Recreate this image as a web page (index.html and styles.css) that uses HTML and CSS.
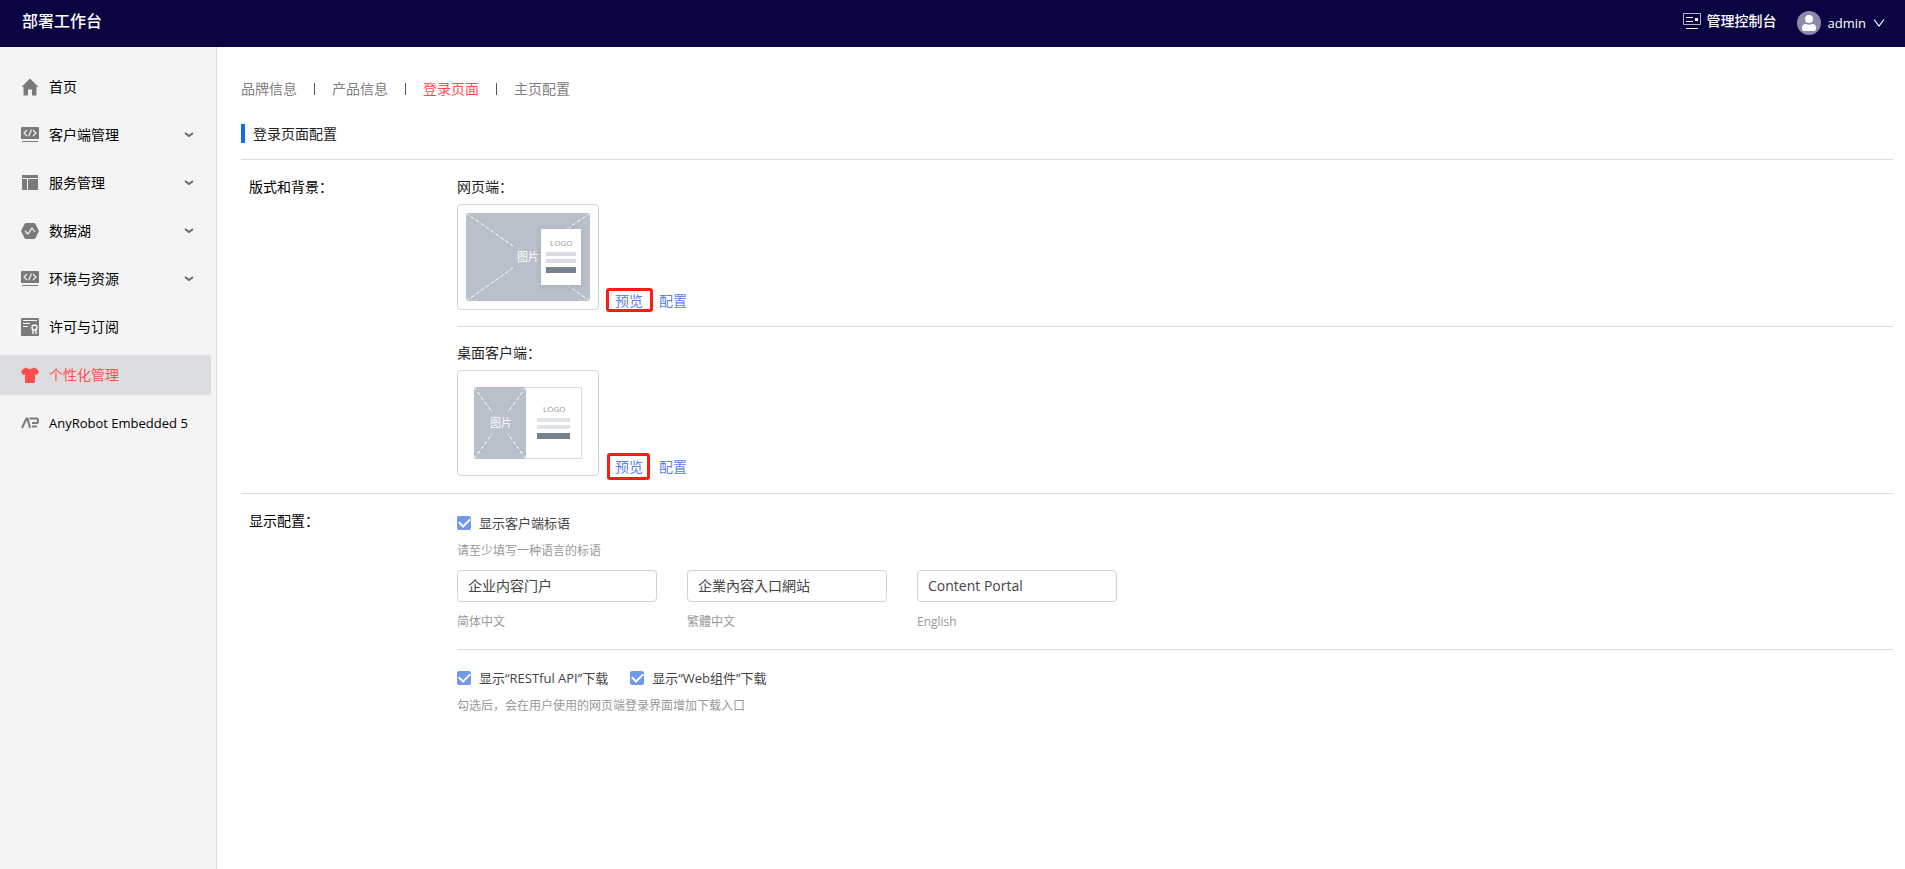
FILE: index.html
```html
<!DOCTYPE html>
<html lang="zh-CN">
<head>
<meta charset="utf-8">
<title>部署工作台</title>
<link rel="stylesheet" href="styles.css">
</head>
<body>
<svg class="defs" aria-hidden="true">
  <symbol id="i-code" viewBox="0 0 18 16">
    <path fill="#7a7a7a" d="M1 0h16q1 0 1 1v11H0V1q0-1 1-1zM1 14h16v1H1z"/>
    <path fill="none" stroke="#f4f4f4" stroke-width="1.200" d="M6 3L3 6 6 9M12 3L15 6 12 9M10.500 2.500L7.500 9.500"/>
  </symbol>
  <symbol id="i-down" viewBox="0 0 10 6">
    <path fill="none" stroke="#6b6b6b" stroke-width="2" d="M1 1l4 3 4-3"/>
  </symbol>
</svg>
<header class="topbar">
  <h1 class="brand">部署工作台</h1>
  <div class="tools">
    <button class="tool" type="button">
      <svg class="i-console" viewBox="0 0 18 16" width="18" height="16"><g fill="none" stroke="#fff"><path stroke="#b5b4cc" d="M.5.500h17v11H.5z"/><path d="M3 4.500h7M3 8.500h7M3 15.500h12"/></g><path fill="#fff" d="M12 5h3v3h-3z"/></svg>
      <span>管理控制台</span>
    </button>
    <button class="tool user" type="button">
      <svg viewBox="0 0 24 24" width="24" height="24"><circle cx="12" cy="12" r="12" fill="#8c8aab"/><circle cx="12" cy="8" r="4" fill="#fff"/><path fill="#fff" d="M5 18v-1q0-4 4-4 3 1.500 6 0 4 0 4 4v1q0 2-2 2H7q-2 0-2-2z"/></svg>
      <span>admin</span>
      <svg class="caret" viewBox="0 0 12 8" width="12" height="8"><path fill="none" stroke="#fff" stroke-width="1.200" d="M1 .500L6 7 11 .500"/></svg>
    </button>
  </div>
</header>
<div class="shell">
  <nav class="side">
    <a class="item" href="#"><svg class="ico" viewBox="0 0 18 18"><path fill="#7a7a7a" d="M9 .500L17.500 9H15.500v8.500h-4.500v-6H7v6H2.500V9H.5z"/></svg><span>首页</span></a>
    <a class="item" href="#"><svg class="ico"><use href="#i-code"/></svg><span>客户端管理</span><svg class="down"><use href="#i-down"/></svg></a>
    <a class="item" href="#"><svg class="ico" viewBox="0 0 18 18"><path fill="#7a7a7a" d="M1 1h16v3H1zM1 5h5v11H1zM7 5h10v11H7z"/></svg><span>服务管理</span><svg class="down"><use href="#i-down"/></svg></a>
    <a class="item" href="#"><svg class="ico" viewBox="0 0 18 18"><path fill="#7a7a7a" d="M5 1h8q1 0 1.500 1L18 9l-3.500 7q-.5 1-1.500 1H5q-1 0-1.500-1L0 9l3.500-7Q4 1 5 1z"/><path fill="none" stroke="#f4f4f4" stroke-width="1.200" d="M4 9l3 3 4-6 3 4"/></svg><span>数据湖</span><svg class="down"><use href="#i-down"/></svg></a>
    <a class="item" href="#"><svg class="ico"><use href="#i-code"/></svg><span>环境与资源</span><svg class="down"><use href="#i-down"/></svg></a>
    <a class="item" href="#"><svg class="ico" viewBox="0 0 18 18"><rect width="18" height="18" rx="1" fill="#7a7a7a"/><g fill="none" stroke="#f4f4f4"><path d="M2 2.500h14M2 5.500h7M2 8.500h5"/><circle cx="13.500" cy="9.500" r="2.500" stroke-width="1.500"/><path stroke-width="1.500" d="M12 12v4M15 12v4"/></g></svg><span>许可与订阅</span></a>
    <a class="item active" href="#" aria-current="page"><svg class="ico" viewBox="0 0 18 18"><path fill="#ff4d4f" d="M5 1.500q4 3 8 0 3 .5 5 4l-2 3.500-2-.5v7.500q0 1-1 1H5q-1 0-1-1V8.500L2 9 0 5.500q2-3.500 5-4z"/></svg><span>个性化管理</span></a>
    <a class="item" href="#"><svg class="ico" viewBox="0 0 18 18"><path fill="none" stroke="#7a7a7a" stroke-width="2" d="M1 14L5.500 4.500h1L9 14M8.500 4.500H16q1 0 1 2.300T16 9h-5M11 12.500h5"/></svg><span class="latin">AnyRobot Embedded 5</span></a>
  </nav>
  <main class="main">
    <div class="tabs">
      <a class="tab" href="#">品牌信息</a>
      <a class="tab" href="#">产品信息</a>
      <a class="tab on" href="#">登录页面</a>
      <a class="tab" href="#">主页配置</a>
    </div>
    <h2 class="title">登录页面配置</h2>
    <section class="section">
      <h3 class="name">版式和背景：</h3>
      <div class="body">
        <div class="layout">
          <p class="label">网页端：</p>
          <div class="line">
            <svg class="thumb" viewBox="0 0 140 104" role="img" aria-label="网页端">
              <path fill="#b9c0ca" d="M8 8h124v88H8z"/>
              <path class="dash" d="M8 8l47 33M132 8L85 41M8 96l47-33M132 96L85 63"/>
              <text x="59" y="56" class="pic">图片</text>
              <path class="card" d="M83 24h40v56H83z"/>
              <text x="92" y="41" class="logo">LOGO</text>
              <path fill="#d9dde3" d="M88 47h30v4H88zM88 54h30v4H88z"/><path fill="#77818f" d="M88 62h30v6H88z"/>
            </svg>
            <a class="link marked wide" href="#">预览</a>
            <a class="link" href="#">配置</a>
          </div>
        </div>
        <div class="layout">
          <p class="label">桌面客户端：</p>
          <div class="line">
            <svg class="thumb" viewBox="0 0 140 104" role="img" aria-label="桌面客户端">
              <path fill="#fff" stroke="#d9dbe0" d="M16.500 16.500h107v71h-107z"/>
              <path fill="#b9c0ca" d="M16 16h52v72H16z"/>
              <path class="dash" d="M16 16l18 25M68 16L50 41M16 88l18-25M68 88L50 63"/>
              <text x="32" y="56" class="pic">图片</text>
              <text x="85" y="41" class="logo">LOGO</text>
              <path fill="#e0e3e8" d="M79 47h33v4H79zM79 54h33v4H79z"/><path fill="#77818f" d="M79 62h33v6H79z"/>
            </svg>
            <a class="link marked tall" href="#">预览</a>
            <a class="link" href="#">配置</a>
          </div>
        </div>
      </div>
    </section>
    <section class="section">
      <h3 class="name">显示配置：</h3>
      <div class="body">
        <div class="slogan">
          <label class="check"><input type="checkbox" checked>显示客户端标语</label>
          <p class="hint">请至少填写一种语言的标语</p>
          <div class="fields">
            <div class="field"><input id="cn" type="text" value="企业内容门户"><label for="cn">简体中文</label></div>
            <div class="field"><input id="tw" type="text" lang="zh-TW" value="企業內容入口網站"><label for="tw" lang="zh-TW">繁體中文</label></div>
            <div class="field"><input id="en" type="text" value="Content Portal"><label for="en">English</label></div>
          </div>
        </div>
        <div class="downloads">
          <div class="checks">
            <label class="check"><input type="checkbox" checked>显示“RESTful API”下载</label>
            <label class="check"><input type="checkbox" checked>显示“Web组件”下载</label>
          </div>
          <p class="hint">勾选后，会在用户使用的网页端登录界面增加下载入口</p>
        </div>
      </div>
    </section>
  </main>
</div>
</body>
</html>
```
FILE: styles.css
```css
* { box-sizing: border-box; }
body {
  margin: 0;
  min-height: 100vh;
  display: flex;
  flex-direction: column;
  font: 14px/20px "Open Sans", "Noto Sans CJK SC", sans-serif;
  color: #000;
  background: #fff;
}
h1, h2, h3, p { margin: 0; font-weight: 400; font-size: 14px; }
a { color: inherit; text-decoration: none; }
button { font: inherit; color: inherit; background: none; border: 0; padding: 0; }
.defs { display: none; }

.topbar {
  display: flex;
  justify-content: space-between;
  align-items: center;
  height: 47px;
  padding: 0 20px 6px 22px;
  background: #0a0442;
  color: #fff;
}
.brand { font-size: 16px; font-weight: 500; }
.tools { display: flex; gap: 20px; font-weight: 500; }
.tool { display: flex; align-items: center; gap: 6px; }
.user { gap: 7px; padding-top: 4px; font-size: 13px; }

.shell { flex: 1; display: flex; }
.side {
  width: 217px;
  padding: 20px 5px 0 0;
  border-right: 1px solid #d9dadd;
  background: #f4f4f4;
  display: flex;
  flex-direction: column;
  gap: 8px;
}
.item {
  display: flex;
  align-items: center;
  gap: 10px;
  height: 40px;
  padding: 0 17px 0 21px;
  border-radius: 0 2px 2px 0;
  white-space: nowrap;
}
.latin { font-size: 13px; }
.ico { width: 18px; height: 18px; flex: none; }
.down { width: 10px; height: 6px; margin-left: auto; }
.active { background: #dcdde1; color: #ff4d4f; }

.main { flex: 1; padding: 32px 12px 0 24px; }
.tabs { display: flex; color: #808080; }
.tab { display: flex; align-items: center; }
.tab + .tab::before {
  content: "";
  width: 1px;
  height: 12px;
  margin: 0 17px;
  background: #555;
}
.on { color: #ff4d4f; }
.title {
  display: flex;
  align-items: center;
  gap: 8px;
  height: 61px;
  padding-top: 9px;
  border-bottom: 1px solid #dcdcdc;
  color: #222;
}
.title::before { content: ""; width: 4px; height: 19px; background: #126ee3; }

.section { display: flex; padding-left: 8px; }
.section + .section { border-top: 1px solid #dcdcdc; }
.name { width: 208px; padding-top: 17px; }
.body { flex: 1; color: #222; }
.layout { padding: 17px 0 16px; }
.layout + .layout { padding-top: 16px; border-top: 1px solid #dcdcdc; }
.label { margin-bottom: 7px; }
.line { display: flex; align-items: flex-end; gap: 16px; }
.thumb { width: 142px; height: 106px; border: 1px solid #d4d5dc; border-radius: 4px; }
.pic { font-size: 11px; fill: #fff; }
.logo { font-size: 8px; fill: #999; }
.dash { fill: none; stroke: #fff; stroke-dasharray: 4 2; }
.card { fill: #fff; filter: drop-shadow(0 1px 3px #a4abb6); }
.link { margin-bottom: -1px; color: #5b80f0; }
.marked { position: relative; }
.marked::after {
  content: "";
  position: absolute;
  border: 3px solid #ff1b0f;
  border-radius: 3px;
}
.wide::after { inset: -3px -10px -1px -9px; }
.tall::after { inset: -4px -7px -3px -8px; }

.slogan { padding: 19px 0 17px; }
.layout + .layout { padding-bottom: 17px; }
.downloads { padding: 18px 0; border-top: 1px solid #dcdcdc; }
.check { display: flex; align-items: center; gap: 8px; font-size: 13px; color: #444; }
.check input {
  appearance: none;
  width: 14px;
  height: 14px;
  margin: 0;
  border-radius: 2px;
  background: #7299e9;
  display: grid;
  place-items: center;
}
.check input:checked::after {
  content: "";
  width: 9px;
  height: 5px;
  margin-bottom: 3px;
  border: solid #fff;
  border-width: 0 0 2px 2px;
  transform: rotate(-45deg);
}
.checks { display: flex; gap: 22px; }
.hint { margin-top: 8px; font-size: 12px; color: #999; }
.fields { display: flex; gap: 30px; margin-top: 9px; }
.field { width: 200px; }
.field input {
  width: 100%;
  height: 32px;
  padding: 0 10px 2px;
  border: 1px solid #d0d1da;
  border-radius: 4px;
  font: inherit;
  color: #444;
}
.field label { display: block; margin-top: 10px; font-size: 12px; color: #999; }
:lang(zh-TW) { font-family: "Open Sans", "Noto Sans CJK TC", sans-serif; }
```
